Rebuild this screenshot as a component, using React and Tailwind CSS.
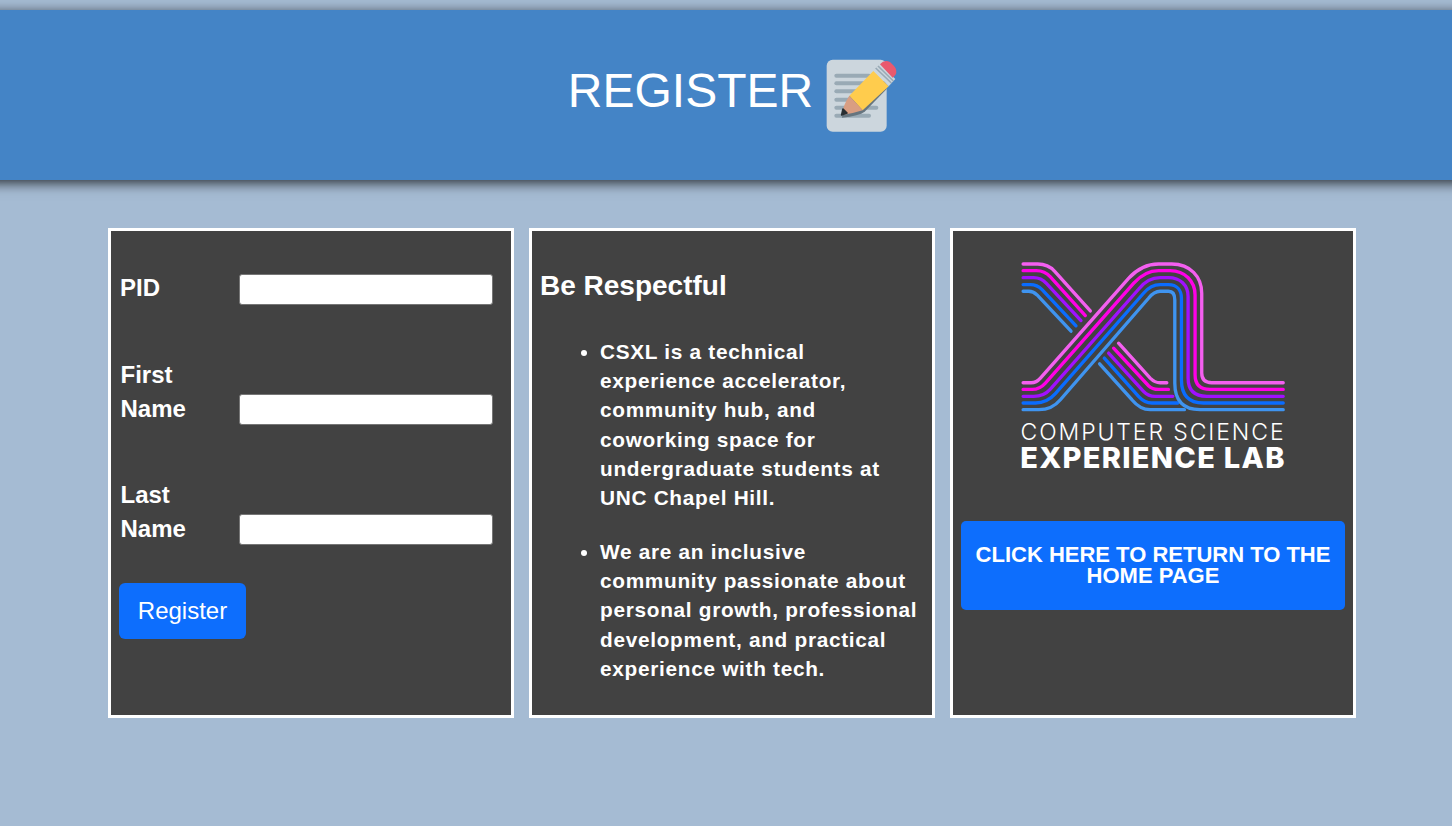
// Register page: header banner and three info cards
const strands = [
  { color: '#f45ff0', d: ['M68 42 H112 Q143 42 163 64 L270 183', 'M355 280 L450 385 Q464 399 480 399 H500', 'M68 399 H92 Q108 399 120 385 L385 85 Q425 42 475 42 H515 C570 42 605 80 605 130 V370 Q605 399 635 399 H850'] },
  { color: '#ff00e6', d: ['M68 62 H108 Q133 62 150 81 L255 197', 'M340 295 L445 408 Q456 419 475 419 H505', 'M68 419 H95 Q118 419 135 400 L400 100 Q435 62 475 62 H510 C555 62 585 95 585 135 V375 Q585 419 630 419 H850'] },
  { color: '#a010ff', d: ['M68 83 H100 Q122 83 138 100 L242 212', 'M325 310 L430 425 Q444 440 465 440 H518', 'M68 440 H100 Q130 440 150 418 L415 118 Q442 83 480 83 H505 C540 83 564 105 564 140 V385 Q564 440 620 440 H850'] },
  { color: '#0a6cff', d: ['M68 104 H90 Q110 104 125 119 L227 228', 'M312 325 L415 440 Q433 460 455 460 H533', 'M68 460 H105 Q140 460 165 432 L430 130 Q452 104 480 104 H505 C530 104 544 120 544 145 V390 Q544 460 610 460 H850'] },
  { color: '#3f94f0', d: ['M68 124 H85 Q98 124 110 135 L212 244', 'M298 342 L395 450 Q420 480 450 480 H553', 'M68 480 H115 Q155 480 180 450 L445 145 Q462 124 480 124 H505 C518 124 524 135 524 150 V400 Q524 480 600 480 H850'] },
];

const MemoIcon = () => (
  <svg width="72" height="74" viewBox="50 28 216 222">
    <rect x="52" y="30" width="180" height="216" rx="18" fill="#ccd6dd" />
    {[78, 101, 125, 150, 174, 198].map((y) => (
      <rect key={y} x="75" y={y - 6} width={y === 174 ? 132 : 110} height="12" rx="6" fill="#99aab5" />
    ))}
    <path d="M97 204 Q150 198 166 186 L232 118 V90 L120 140 Z" fill="#66757f" />
    <path d="M120 138 L192 64 L238 110 L160 182 Z" fill="#ffcc4d" />
    <path d="M120 138 L160 182 Q130 192 97 196 Q102 165 120 138 Z" fill="#d99e82" />
    <path d="M101 178 L113 190 L97 196 Z" fill="#292f33" stroke="#292f33" strokeWidth="5" strokeLinejoin="round" />
    <path d="M192 62 L212 44 L258 88 L238 110 Z" fill="#ccd6dd" />
    <path d="M199 55 L246 100 M206 49 L252 94" stroke="#99aab5" strokeWidth="5" />
    <path d="M212 44 Q225 28 242 37 L254 49 Q266 62 258 76 L250 84 Z" fill="#ea596e" />
  </svg>
);

const XlLogo = () => (
  <svg width="267" height="153" viewBox="60 30 800 460" fill="none" strokeLinecap="round">
    {strands.map((s) => s.d.map((d) => (
      <path key={d} d={d} stroke={s.color} strokeWidth="10" />
    )))}
  </svg>
);

const Field = ({ lines }) => (
  <div className="flex items-end h-[120px] pl-[1.5px]">
    <label className="w-[118.5px] font-bold text-[24px] leading-[34px] text-white">
      {lines.map((l) => <div key={l}>{l}</div>)}
    </label>
    <input className="w-[254px] h-[31px] bg-white rounded-[3px] border border-[#767676] mb-[1px]" />
  </div>
);

const Card = ({ className, children }) => (
  <div className={`w-[406px] h-[490px] bg-[#424242] border-[3px] border-white ${className}`}>{children}</div>
);

export default function App() {
  return (
    <div className="min-h-[826px] bg-[#a5bbd3] pt-[10px] overflow-hidden font-['Liberation_Sans',Arial,sans-serif]">
      <header className="h-[170px] -mx-[30px] bg-[#4484c6] shadow-[0_3px_12px_rgba(0,0,0,0.75)] flex items-center justify-center gap-[13px] text-white">
        <h1 className="text-[48px] leading-none mb-[8px]">REGISTER</h1>
        <span className="mt-[2px] mr-[-14px]"><MemoIcon /></span>
      </header>

      <main className="w-[1248px] ml-[108px] mt-[48px] flex gap-[15px]">
        <Card className="px-[8px] pt-[6px]">
          <div className="-mt-[2px] h-[71px] flex items-end">
            <div className="flex items-end pl-[1px]">
              <label className="w-[119px] font-bold text-[24px] leading-[34px] text-white mb-[1px]">PID</label>
              <input className="w-[254px] h-[31px] bg-white rounded-[3px] border border-[#767676] mb-[1px]" />
            </div>
          </div>
          <Field lines={['First', 'Name']} />
          <Field lines={['Last', 'Name']} />
          <button className="mt-[37px] w-[127px] h-[56px] bg-[#0d6efd] rounded-[6px] text-white text-[24px]">Register</button>
        </Card>

        <Card className="px-[8px] pt-[39px] text-white font-bold">
          <h2 className="text-[28px] leading-[32px] pb-[34.75px]">Be Respectful</h2>
          <ul className="list-disc pl-[60px] pr-[5px] text-[20.8px] leading-[29.25px] tracking-[0.7px]">
            <li className="mb-[24.5px]">CSXL is a technical experience accelerator, community hub, and coworking space for undergraduate students at UNC Chapel Hill.</li>
            <li>We are an inclusive community passionate about personal growth, professional development, and practical experience with tech.</li>
          </ul>
        </Card>

        <Card className="px-[8px] pt-[29px] flex flex-col items-center text-white">
          <XlLogo />
          <div className="font-['Inter',sans-serif] font-light text-[23px] leading-[26px] tracking-[1.9px] mt-[6px] whitespace-nowrap">COMPUTER SCIENCE</div>
          <div className="font-['Inter',sans-serif] font-extrabold text-[29px] leading-[26px] tracking-[1.3px] whitespace-nowrap">EXPERIENCE LAB</div>
          <button className="mt-[50px] w-[384px] h-[89px] bg-[#0d6efd] rounded-[5px] text-white font-bold text-[22px] leading-[21px] px-[8px] pb-[2px]">CLICK HERE TO RETURN TO THE HOME PAGE</button>
        </Card>
      </main>
    </div>
  );
}
